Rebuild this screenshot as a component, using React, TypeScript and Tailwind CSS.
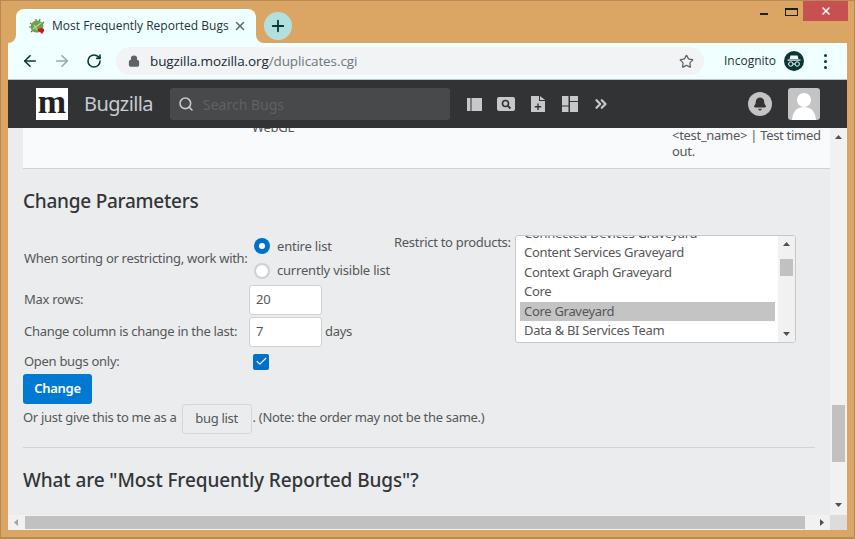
import { Bell, Search, Star, Lock, X, Plus, ArrowLeft, ArrowRight, RotateCw, ChevronsRight, Check } from 'lucide-react';

const sans = 'font-["Noto_Sans",sans-serif]';

const products = [
  'Connected Devices Graveyard',
  'Content Services Graveyard',
  'Context Graph Graveyard',
  'Core',
  'Core Graveyard',
  'Data & BI Services Team',
];

function BugFavicon() {
  return (
    <svg width="18" height="17" viewBox="0 0 18 17">
      <g stroke="#4f8a3a" strokeWidth="1.2">
        <path d="M2 5 L5 7 M1 9 L4 9 M3 14 L5 12 M8 1 L8 4 M12 1 L11 4 M16 4 L14 6" />
      </g>
      <ellipse cx="9" cy="8.5" rx="6.5" ry="6" transform="rotate(-25 9 8.5)" fill="#6fa04a" />
      <path d="M5 11 L13 5 M6 7 L9 12" stroke="#b9d6a0" strokeWidth="1.3" />
      <path d="M10 11 L13 10 L16 11 L16 13 L14 16 L12 14 L10 13 Z" fill="#d8121f" />
    </svg>
  );
}

function IncognitoIcon() {
  return (
    <svg width="20" height="20" viewBox="0 0 20 20">
      <circle cx="10" cy="10" r="10" fill="#0a3636" />
      <path d="M6.5 4.5 L13.5 4.5 L14.5 8 L5.5 8 Z" fill="#f0ffff" />
      <rect x="3.5" y="8.5" width="13" height="1.2" fill="#f0ffff" />
      <circle cx="6.8" cy="13" r="2.2" fill="none" stroke="#f0ffff" strokeWidth="1" />
      <circle cx="13.2" cy="13" r="2.2" fill="none" stroke="#f0ffff" strokeWidth="1" />
      <path d="M9 13 L11 13" stroke="#f0ffff" strokeWidth="1" />
    </svg>
  );
}

function HeaderIcons() {
  return (
    <div className="ml-[17px] flex items-center">
      <svg width="15" height="13" viewBox="0 0 15 13"><path d="M0 0H3.5V13H0ZM4.5 0H15V13H4.5Z" fill="#c6c8ca" /></svg>
      <svg className="ml-[15px]" width="18" height="14" viewBox="0 0 18 14">
        <rect width="18" height="14" rx="2" fill="#c6c8ca" />
        <circle cx="8.5" cy="6.5" r="3" fill="none" stroke="#323335" strokeWidth="1.6" />
        <path d="M10.8 8.8 L13.5 11.5" stroke="#323335" strokeWidth="1.8" />
      </svg>
      <svg className="ml-[16px]" width="14" height="16" viewBox="0 0 14 16">
        <path d="M0 0H8V5H14V16H0ZM9 0L14 4H9Z" fill="#c6c8ca" />
        <path d="M7 7.5V14M3.8 10.8H10.2" stroke="#323335" strokeWidth="1.4" />
      </svg>
      <svg className="ml-[17px]" width="16" height="16" viewBox="0 0 16 16">
        <path d="M0 0H6.5V9.5H0ZM0 10.5H6.5V16H0ZM8 0H16V5H8ZM8 6H16V16H8Z" fill="#c6c8ca" />
      </svg>
      <ChevronsRight className="ml-[14px] text-[#c6c8ca]" size={18} strokeWidth={3} />
    </div>
  );
}

function ScrollArrow({ dir, tone }: { dir: 'up' | 'down' | 'left' | 'right'; tone: string }) {
  const points = { up: '0,4 3.5,0 7,4', down: '0,0 7,0 3.5,4', left: '4,0 4,7 0,3.5', right: '0,0 0,7 4,3.5' }[dir];
  const horizontal = dir === 'left' || dir === 'right';
  return (
    <svg width={horizontal ? 4 : 7} height={horizontal ? 7 : 4} viewBox={horizontal ? '0 0 4 7' : '0 0 7 4'}>
      <polygon points={points} fill={tone} />
    </svg>
  );
}

export default function App() {
  return (
    <div className={`flex h-[539px] w-[855px] flex-col overflow-hidden border border-b-2 border-[#b58a56] bg-[#dba563] ${sans}`}>
      {/* Title bar */}
      <div className="flex h-[42px] shrink-0 items-start">
        <div className="ml-[15px] mt-[8px] flex items-center">
          <div className="relative flex h-[34px] w-[240px] items-center rounded-t-[8px] bg-[#f0ffff] pl-[12px] pr-[9px]">
            <div className="absolute bottom-0 left-[-8px] h-[8px] w-[8px] bg-[#f0ffff]">
              <div className="h-full w-full rounded-br-[8px] bg-[#dba563]" />
            </div>
            <div className="absolute bottom-0 right-[-8px] h-[8px] w-[8px] bg-[#f0ffff]">
              <div className="h-full w-full rounded-bl-[8px] bg-[#dba563]" />
            </div>
            <BugFavicon />
            <span className="ml-[6px] flex-1 truncate font-['Open_Sans',sans-serif] text-[12px] text-[#21343a]">Most Frequently Reported Bugs</span>
            <X size={14} strokeWidth={2.6} className="text-[#5f6b6d]" />
          </div>
          <div className="ml-[8px] flex h-[28px] w-[28px] items-center justify-center rounded-full bg-[#b2e0df]">
            <Plus size={18} strokeWidth={2.4} className="text-[#0a3636]" />
          </div>
        </div>
        <div className="ml-auto mr-[6px] flex items-start">
          <div className="mr-[17px] mt-[12px] h-[2px] w-[8px] bg-[#1d1d1d]" />
          <div className="mr-[5px] mt-[7px] h-[8px] w-[13px] border border-t-2 border-[#1d1d1d]" />
          <div className="flex h-[20px] w-[45px] items-center justify-center bg-[#c75050]">
            <X size={12} strokeWidth={3} className="text-white" />
          </div>
        </div>
      </div>

      <div className="ml-[7px] mr-[7px] flex min-h-0 flex-1 flex-col mb-[7px]">
        {/* Toolbar */}
        <div className="flex h-[37px] shrink-0 items-center border-b border-[#b9c4c4] bg-[#f0ffff]">
          <ArrowLeft size={18} strokeWidth={2.2} className="ml-[13px] text-[#0a3636]" />
          <ArrowRight size={18} strokeWidth={2.2} className="ml-[14px] text-[#92a8a8]" />
          <RotateCw size={16} strokeWidth={2.4} className="ml-[15px] text-[#0a3636]" />
          <div className="ml-[14px] flex h-[28px] w-[588px] items-center rounded-full bg-[#f1f3f4] pl-[12px]">
            <Lock size={12} strokeWidth={2.5} className="text-[#5f6368]" fill="#5f6368" />
            <span className="ml-[10px] font-['Open_Sans',sans-serif] text-[13.5px] tracking-[-0.1px] text-[#202a33]">
              bugzilla.mozilla.org<span className="text-[#6f777c]">/duplicates.cgi</span>
            </span>
            <Star size={15} strokeWidth={2} className="ml-auto mr-[10px] text-[#5f6368]" />
          </div>
          <span className="ml-[20px] font-['Open_Sans',sans-serif] text-[12px] text-[#21343a]">Incognito</span>
          <div className="ml-[8px]"><IncognitoIcon /></div>
          <div className="ml-[20px] flex flex-col gap-[3px]">
            <div className="h-[3px] w-[3px] rounded-full bg-[#0a3636]" />
            <div className="h-[3px] w-[3px] rounded-full bg-[#0a3636]" />
            <div className="h-[3px] w-[3px] rounded-full bg-[#0a3636]" />
          </div>
        </div>

        {/* Bugzilla header */}
        <div className="flex h-[48px] shrink-0 items-center bg-[#323335] pl-[28px] pr-[27px]">
          <div className="flex h-[32px] w-[32px] items-center justify-center bg-white pb-[4px] font-['Liberation_Serif',serif] text-[34px] font-bold leading-none text-[#222]">m</div>
          <span className="ml-[16px] w-[69px] whitespace-nowrap text-[20px] tracking-[-0.6px] text-[#c6cbd0]">Bugzilla</span>
          <div className="ml-[17px] flex h-[32px] w-[280px] items-center rounded-[3px] bg-[#48494b] pl-[8px]">
            <Search size={16} strokeWidth={2.4} className="text-[#c6c8ca]" />
            <span className="ml-[9px] text-[14px] text-[#606163]">Search Bugs</span>
          </div>
          <HeaderIcons />
          <div className="ml-auto flex h-[24px] w-[24px] items-center justify-center rounded-full bg-[#c4c4c4]">
            <Bell size={14} strokeWidth={2.4} fill="#323335" className="text-[#323335]" />
          </div>
          <div className="ml-[16px] h-[32px] w-[32px] overflow-hidden rounded-[3px] bg-[#c4c4c4]">
            <svg width="32" height="32" viewBox="0 0 32 32">
              <circle cx="16" cy="12" r="7" fill="#fff" />
              <path d="M4 32 C5 22 10 19 16 19 C22 19 27 22 28 32 Z" fill="#fff" />
            </svg>
          </div>
        </div>

        {/* Page and vertical scrollbar */}
        <div className="flex min-h-0 flex-1">
          <div className="min-w-0 flex-1 overflow-hidden bg-[#ebecee] text-[13px] tracking-[-0.3px] text-[#555759]">
            <div className="ml-[15px] flex h-[41px] border-b border-[#cfd0d2] bg-[#f9fafc]">
              <div className="ml-[229px] mt-[-10px] h-[18px] w-[420px] leading-[18px]">WebGL</div>
              <div className="whitespace-nowrap">
                <div className="leading-[15px]">&lt;test_name&gt; | Test timed</div>
                <div className="leading-[16px]">out.</div>
              </div>
            </div>

            <div className="ml-[15px] mr-[15px]">
              <h2 className="mt-[20px] text-[19px] font-medium leading-[24px] tracking-[-0.25px] text-[#333537]">Change Parameters</h2>

              <div className="mt-[23px] flex items-start">
                <div className="w-[371px]">
                  <div className="flex h-[47px] items-center">
                    <div className="mt-[-1px] w-[227px] whitespace-nowrap pl-px">When sorting or restricting, work with:</div>
                    <div className="mt-[-2px] flex flex-col gap-[5px] tracking-[-0.2px]">
                      <label className="flex items-center">
                        <span className="ml-[4px] flex h-[16px] w-[16px] items-center justify-center rounded-full bg-[#0070c9]">
                          <span className="h-[6px] w-[6px] rounded-full bg-white" />
                        </span>
                        <span className="ml-[7px]">entire list</span>
                      </label>
                      <label className="flex items-center">
                        <span className="ml-[4px] h-[16px] w-[16px] rounded-full border-2 border-[#cfd0d2] bg-white" />
                        <span className="ml-[7px] whitespace-nowrap">currently visible list</span>
                      </label>
                    </div>
                  </div>
                  <div className="mt-[2px] flex h-[30px] items-center">
                    <div className="w-[226px] pl-px">Max rows:</div>
                    <div className="flex h-[30px] w-[73px] items-center rounded-[3px] border border-[#cfd0d2] bg-white pl-[6px]">20</div>
                  </div>
                  <div className="mt-[2px] flex h-[30px] items-center">
                    <div className="w-[226px] whitespace-nowrap pl-px">Change column is change in the last:</div>
                    <div className="flex h-[30px] w-[73px] items-center rounded-[3px] border border-[#cfd0d2] bg-white pl-[6px]">7</div>
                    <span className="ml-[3px]">days</span>
                  </div>
                  <div className="mt-[6px] flex h-[17px] items-center">
                    <div className="w-[230px] pl-px">Open bugs only:</div>
                    <span className="flex h-[16px] w-[16px] items-center justify-center rounded-[2px] bg-[#0070c9]">
                      <Check size={13} strokeWidth={2} className="text-white" />
                    </span>
                  </div>
                </div>
                <div className="mt-[-3px] w-[121px] whitespace-nowrap">Restrict to products:</div>
                <div className="mt-[-1px] flex h-[108px] w-[281px] overflow-hidden rounded-[3px] border border-[#c8c8c8] bg-white">
                  <div className="mt-[-12.5px] flex-1 pl-[4px] pr-[3px]">
                    {products.map((name) => (
                      <div
                        key={name}
                        className={`h-[19.5px] truncate pl-[4px] leading-[19.5px] ${name === 'Core Graveyard' ? 'bg-[#c4c4c4]' : ''}`}
                      >
                        {name}
                      </div>
                    ))}
                  </div>
                  <div className="flex w-[17px] flex-col items-center bg-[#f1f1f1] pt-[6px]">
                    <ScrollArrow dir="up" tone="#505050" />
                    <div className="mt-[13px] h-[17px] w-[13px] bg-[#c1c1c1]" />
                    <div className="mt-auto mb-[6px]"><ScrollArrow dir="down" tone="#505050" /></div>
                  </div>
                </div>
              </div>

              <div className="mt-[4px] flex h-[30px] w-[69px] items-center justify-center rounded-[3px] bg-[#0079d3] font-semibold text-white">Change</div>
              <div className="flex h-[29px] items-center">
                <span className="mb-[2px]">Or just give this to me as a</span>
                <span className="ml-[5px] flex h-[30px] w-[70px] items-center justify-center rounded-[3px] border border-[#d5d6d8] bg-[#ebecee]">bug list</span>
                <span className="mb-[2px] ml-px">. (Note: the order may not be the same.)</span>
              </div>
              <div className="mt-[14px] h-px bg-[#d2d3d5]" />
              <h2 className="mt-[20px] whitespace-nowrap text-[19px] font-medium leading-[24px] tracking-[-0.1px] text-[#333537]">What are "Most Frequently Reported Bugs"?</h2>
            </div>
          </div>
          <div className="flex w-[17px] shrink-0 flex-col items-center bg-[#f1f1f1] pt-[7px]">
            <ScrollArrow dir="up" tone="#505050" />
            <div className="mt-[266px] h-[57px] w-[13px] bg-[#c1c1c1]" />
            <div className="mt-auto mb-[8px]"><ScrollArrow dir="down" tone="#505050" /></div>
          </div>
        </div>

        {/* Horizontal scrollbar */}
        <div className="flex h-[15px] shrink-0 items-center">
          <div className="flex h-full flex-1 items-center bg-[#f1f1f1] pl-[6px]">
            <ScrollArrow dir="left" tone="#a3a3a3" />
            <div className="ml-[7px] h-[13px] w-[780px] bg-[#c1c1c1]" />
            <div className="ml-[15px]"><ScrollArrow dir="right" tone="#505050" /></div>
          </div>
          <div className="h-full w-[17px] bg-[#dcdcdc]" />
        </div>
      </div>
    </div>
  );
}
